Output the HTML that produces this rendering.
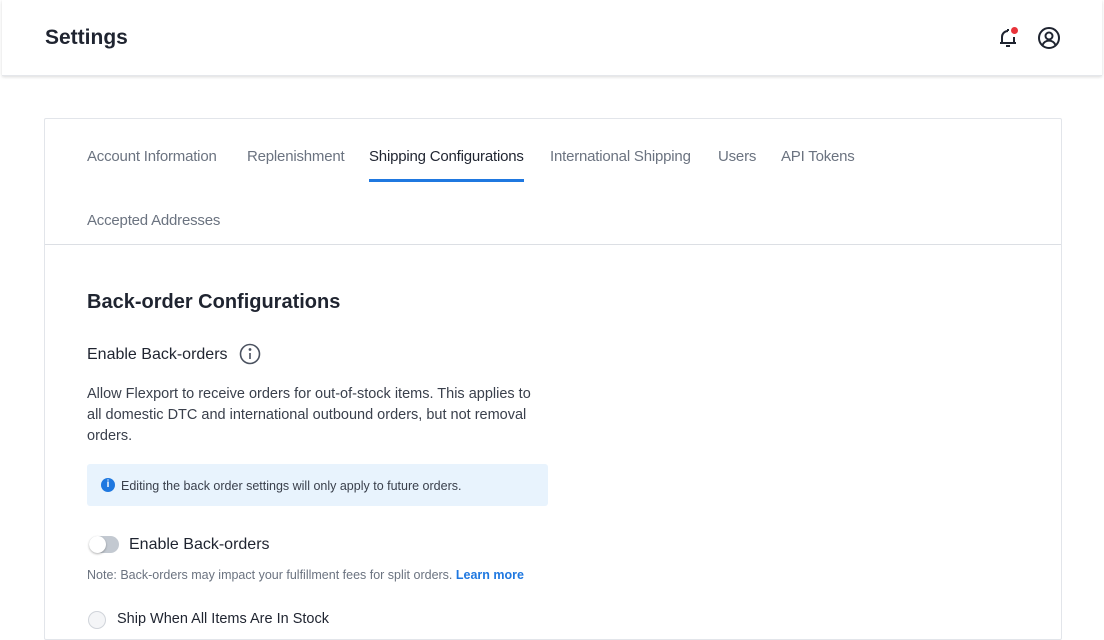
<!DOCTYPE html>
<html><head><style>
body{margin:0;width:1104px;height:622px;overflow:hidden;background:#fff;font-family:"Liberation Sans",sans-serif;position:relative}
.hdr{position:absolute;left:2px;top:0;width:1100px;height:75px;background:#fff;box-shadow:0 1px 3px rgba(0,0,0,.15);border-bottom:1px solid #e5e7eb}
.hdr h1{position:absolute;left:43px;top:26px;margin:0;font-size:21px;font-weight:bold;color:#1f2430}
.card{position:absolute;left:44px;top:118px;width:1016px;height:520px;border:1px solid #e2e5ea;border-radius:2px}
.tab{position:absolute;font-size:15px;color:#6b7380;top:148px;letter-spacing:-0.2px}
.sel{color:#1f2430}
.ul{position:absolute;left:369px;top:179px;width:155px;height:3px;background:#1f78e0}
.line{position:absolute;left:45px;top:244px;width:1016px;height:1px;background:#dcdfe4}
h2{position:absolute;left:87px;top:291px;margin:0;font-size:20px;font-weight:bold;color:#1f2430}
.t{position:absolute;color:#1f2430}
</style></head><body>
<div class="hdr"><h1>Settings</h1>
<svg style="position:absolute;left:994px;top:26px" width="24" height="24" viewBox="0 0 24 24" fill="none" stroke="#1f2430" stroke-width="2"><path d="M6 17V11a6 6 0 0 1 6-6"/><path d="M4 17h16"/><path d="M18 11v6"/><path d="M10 20h4"/><path d="M12 5V3"/></svg>
<div style="position:absolute;left:1009px;top:27px;width:7px;height:7px;border-radius:50%;background:#e8333a"></div>
<svg style="position:absolute;left:1035px;top:26px" width="24" height="24" viewBox="0 0 24 24" fill="none" stroke="#1f2430" stroke-width="2"><circle cx="12" cy="12" r="10"/><circle cx="12" cy="10" r="3.5"/><path d="M5.5 19a7 7 0 0 1 13 0"/></svg>
</div>
<div class="card"></div>
<div class="tab" style="left:87px">Account Information</div>
<div class="tab" style="left:247px">Replenishment</div>
<div class="tab sel" style="left:369px">Shipping Configurations</div>
<div class="tab" style="left:550px">International Shipping</div>
<div class="tab" style="left:718px">Users</div>
<div class="tab" style="left:781px">API Tokens</div>
<div class="tab" style="left:87px;top:212px">Accepted Addresses</div>
<div class="ul"></div><div class="line"></div>
<h2>Back-order Configurations</h2>
<div class="t" style="left:87px;top:346px;font-size:16px">Enable Back-orders</div>
<svg style="position:absolute;left:239px;top:343px" width="22" height="22" viewBox="0 0 22 22" fill="none" stroke="#4b5260" stroke-width="1.6"><circle cx="11" cy="11" r="9.5"/><path d="M11 10v6"/><circle cx="11" cy="6.5" r=".6" fill="#4b5260"/></svg>
<div class="t" style="left:87px;top:384px;width:458px;font-size:14.5px;line-height:21px;color:#3a404c">Allow Flexport to receive orders for out-of-stock items. This applies to all domestic DTC and international outbound orders, but not removal orders.</div>
<div style="position:absolute;left:87px;top:464px;width:461px;height:42px;background:#e8f3fd;border-radius:3px"></div>
<div style="position:absolute;left:101px;top:478px;width:14px;height:14px;border-radius:50%;background:#1f78e0;color:#fff;font-size:10px;font-weight:bold;text-align:center;line-height:14px">i</div>
<div class="t" style="left:121px;top:479px;font-size:12.5px;color:#3a404c">Editing the back order settings will only apply to future orders.</div>
<div style="position:absolute;left:89px;top:536px;width:30px;height:17px;border-radius:9px;background:#c3c9d1"></div>
<div style="position:absolute;left:89px;top:536px;width:17px;height:17px;border-radius:50%;background:#fff;box-shadow:0 1px 2px rgba(0,0,0,.3)"></div>
<div class="t" style="left:129px;top:536px;font-size:16px">Enable Back-orders</div>
<div class="t" style="left:87px;top:568px;font-size:12.5px;color:#6b7380">Note: Back-orders may impact your fulfillment fees for split orders. <b style="color:#1f78e0">Learn more</b></div>
<div style="position:absolute;left:88px;top:611px;width:16px;height:16px;border-radius:50%;border:1px solid #d0d4da;background:#f4f5f7"></div>
<div class="t" style="left:117px;top:611px;font-size:14.5px">Ship When All Items Are In Stock</div>
</body></html>
